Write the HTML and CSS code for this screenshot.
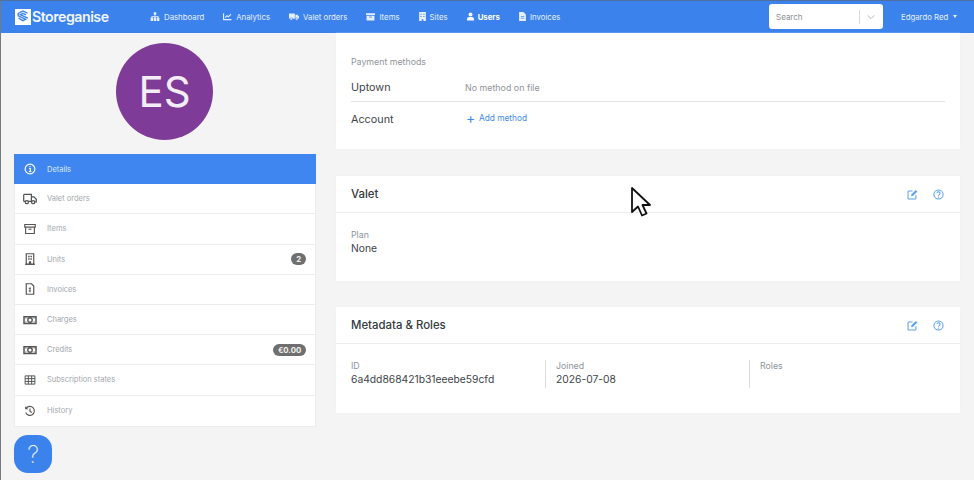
FILE: index.html
```html
<!DOCTYPE html>
<html lang="en">
<head>
<meta charset="utf-8">
<title>Storeganise</title>
<link rel="stylesheet" href="styles.css">
</head>
<body>
<svg class="defs" width="0" height="0" aria-hidden="true">
  <symbol id="i-truck" viewBox="0 0 20 16"><path d="M1 2.500a1 1 0 0 1 1-1h10v10H2a1 1 0 0 1-1-1zM12 5h3.500l3.500 3.500V12h-7z" fill="none" stroke="currentColor" stroke-width="1.800"/><circle cx="5.500" cy="12.500" r="2.200" fill="#fff" stroke="currentColor" stroke-width="1.800"/><circle cx="14.500" cy="12.500" r="2.200" fill="#fff" stroke="currentColor" stroke-width="1.800"/></symbol>
  <symbol id="i-box" viewBox="0 0 16 16"><path d="M1 2h14v3.500H1zM2.200 5.500h11.600V14H2.200z" fill="none" stroke="currentColor" stroke-width="1.500"/><path d="M6 8.300h4" stroke="currentColor" stroke-width="1.500"/></symbol>
  <symbol id="i-building" viewBox="0 0 16 16"><path d="M3 1h10v14H3z" fill="none" stroke="currentColor" stroke-width="1.600"/><path d="M1.500 15h13" stroke="currentColor" stroke-width="1.600"/><path d="M5.500 3.500h2v2h-2zM8.500 3.500h2v2h-2zM5.500 7h2v2h-2zM8.500 7h2v2h-2zM6.500 11h3v4h-3z" fill="currentColor"/></symbol>
  <symbol id="i-file" viewBox="0 0 16 16"><path d="M3 1h7l3 3v11H3z" fill="none" stroke="currentColor" stroke-width="1.600"/><path d="M8 5.500v7M6.300 7.500h2.700M6.300 10.500H9" stroke="currentColor" stroke-width="1.200"/></symbol>
  <symbol id="i-money" viewBox="0 0 18 16"><path d="M1 3.500h16v9H1z" fill="none" stroke="currentColor" stroke-width="2"/><circle cx="9" cy="8" r="3" fill="none" stroke="currentColor" stroke-width="1.800"/><path d="M3 5.500h1M3 10.500h1M14 5.500h1M14 10.500h1" stroke="currentColor" stroke-width="1.500"/></symbol>
  <symbol id="i-table" viewBox="0 0 16 16"><path d="M1.500 2.500h13v11h-13zM1.500 6.200h13M1.500 9.900h13M5.800 2.500v11M10.200 2.500v11" fill="none" stroke="currentColor" stroke-width="1.300"/></symbol>
  <symbol id="i-history" viewBox="0 0 16 16"><path d="M3 4.200A6 6 0 1 1 2.200 10M8 4.500V8.500l2.500 1.500" fill="none" stroke="currentColor" stroke-width="1.500"/><path d="M1.500 1.500v4.200h4.200z" fill="currentColor"/></symbol>
  <symbol id="i-edit" viewBox="0 0 16 16"><path d="M13 9v4.500a1 1 0 0 1-1 1H2.500a1 1 0 0 1-1-1V4a1 1 0 0 1 1-1H8" fill="none" stroke="currentColor" stroke-width="1.500"/><path d="M6 10.500l.6-2.800 6.300-6.300 2.200 2.200-6.300 6.300z" fill="currentColor"/></symbol>
  <symbol id="i-help" viewBox="0 0 16 16"><circle cx="8" cy="8" r="6.700" fill="none" stroke="currentColor" stroke-width="1.500"/><path d="M5.800 6.200a2.200 2.200 0 1 1 3.300 1.900c-.8.500-1.100.8-1.100 1.700" fill="none" stroke="currentColor" stroke-width="1.500"/><circle cx="8" cy="11.800" r="1" fill="currentColor"/></symbol>
</svg>

<header class="topbar">
  <div class="brand">
    <svg class="brand-mark" viewBox="0 0 16 16" aria-hidden="true"><path d="M0 0h16v16H0z" fill="#fff"/><path d="M12.500 4.200 8 2 3.200 4.500v2.300l7.500 3.500L8 11.700 5 10.200M3.500 9.200 8 11.500M12.800 9.200 5.300 5.700 8 4.300l3 1.500" fill="none" stroke="#3b82ec" stroke-width="1.300"/></svg>
    <span class="brand-name">Storeganise</span>
  </div>
  <nav class="mainnav">
    <a class="navlink"><svg class="navicon nav-w13" viewBox="0 0 16 14"><path d="M6 0h4v4H8.700v2H13.500v2.500H15V14h-4V8.500h1.200V7.300H8.700v1.200H10V14H6V8.500h1.300V7.300H3.800v1.200H5V14H1V8.500h1.500V6h5V4H6z" fill="currentColor"/></svg>Dashboard</a>
    <a class="navlink"><svg class="navicon nav-w11" viewBox="0 0 16 14"><path d="M1 1v11.500h14" fill="none" stroke="currentColor" stroke-width="2"/><path d="M4 9l3-3.500 2.500 2L14 3" fill="none" stroke="currentColor" stroke-width="2"/></svg>Analytics</a>
    <a class="navlink"><svg class="navicon nav-w13" viewBox="0 0 18 14"><path d="M0 1.500h10.500V11H0zM11.500 4h3.500L18 7v4h-6.500z" fill="currentColor"/><circle cx="4" cy="11.500" r="2.300" fill="currentColor" stroke="#3b82ec"/><circle cx="14" cy="11.500" r="2.300" fill="currentColor" stroke="#3b82ec"/></svg>Valet orders</a>
    <a class="navlink"><svg class="navicon nav-w10" viewBox="0 0 16 14"><path d="M0 1h16v3.500H0zM1 5.500h14V14H1z" fill="currentColor"/><path d="M5.500 8h5" stroke="#3b82ec" stroke-width="1.500"/></svg>Items</a>
    <a class="navlink"><svg class="navicon nav-w8" viewBox="0 0 12 16"><path d="M0 0h12v16H7.500v-3h-3v3H0z" fill="currentColor"/><path d="M2.500 3h2v2h-2zM7.500 3h2v2h-2zM2.500 7h2v2h-2zM7.500 7h2v2h-2z" fill="#3b82ec"/></svg>Sites</a>
    <a class="navlink is-active"><svg class="navicon nav-w8" viewBox="0 0 14 16"><circle cx="7" cy="4" r="4" fill="currentColor"/><path d="M0 16v-2.500A4.500 4.500 0 0 1 4.500 9h5a4.500 4.500 0 0 1 4.500 4.500V16z" fill="currentColor"/></svg>Users</a>
    <a class="navlink"><svg class="navicon nav-w7" viewBox="0 0 12 16"><path d="M0 0h7.500L12 4.500V16H0z" fill="currentColor"/><path d="M3 8h6M3 11h6" stroke="#3b82ec" stroke-width="1.200"/></svg>Invoices</a>
  </nav>
  <div class="searchbox">
    <span class="search-text">Search</span>
    <span class="search-sep"></span>
    <svg class="search-caret" viewBox="0 0 12 8"><path d="M1 1.500l5 5 5-5" fill="none" stroke="#b4b8bc" stroke-width="1.500"/></svg>
  </div>
  <div class="usermenu">Edgardo Red<span class="user-caret"></span></div>
</header>

<div class="page">
  <aside class="sidebar">
    <div class="avatar">ES</div>
    <ul class="sidemenu">
      <li class="sideitem is-current"><svg class="sideicon" viewBox="0 0 16 16"><circle cx="8" cy="8" r="6.500" fill="none" stroke="currentColor" stroke-width="1.600"/><path d="M8 4v1.800M6.800 7.300H8.400V11M6.600 11.300h3.200" fill="none" stroke="currentColor" stroke-width="1.500"/></svg>Details</li>
      <li class="sideitem"><svg class="sideicon wide"><use href="#i-truck"/></svg>Valet orders</li>
      <li class="sideitem"><svg class="sideicon"><use href="#i-box"/></svg>Items</li>
      <li class="sideitem"><svg class="sideicon"><use href="#i-building"/></svg>Units<span class="pill">2</span></li>
      <li class="sideitem"><svg class="sideicon"><use href="#i-file"/></svg>Invoices</li>
      <li class="sideitem"><svg class="sideicon wide"><use href="#i-money"/></svg>Charges</li>
      <li class="sideitem"><svg class="sideicon wide"><use href="#i-money"/></svg>Credits<span class="pill">€0.00</span></li>
      <li class="sideitem"><svg class="sideicon"><use href="#i-table"/></svg>Subscription states</li>
      <li class="sideitem"><svg class="sideicon"><use href="#i-history"/></svg>History</li>
    </ul>
  </aside>

  <main class="content">
    <section class="card card-pay">
      <div class="pay-title">Payment methods</div>
      <div class="pay-row pay-row-line"><span class="pay-name">Uptown</span><span class="pay-value">No method on file</span></div>
      <div class="pay-row"><span class="pay-name">Account</span><a class="add-link"><span class="plus">+</span>Add method</a></div>
    </section>

    <section class="card">
      <div class="card-head">
        <h2 class="card-title">Valet</h2>
        <svg class="head-icon"><use href="#i-edit"/></svg>
        <svg class="head-icon"><use href="#i-help"/></svg>
      </div>
      <div class="card-body body-valet">
        <div class="label">Plan</div>
        <div class="value">None</div>
      </div>
    </section>

    <section class="card">
      <div class="card-head">
        <h2 class="card-title">Metadata &amp; Roles</h2>
        <svg class="head-icon"><use href="#i-edit"/></svg>
        <svg class="head-icon"><use href="#i-help"/></svg>
      </div>
      <div class="card-body meta-grid">
        <div class="meta-col"><div class="label">ID</div><div class="value">6a4dd868421b31eeebe59cfd</div></div>
        <div class="meta-col"><div class="label">Joined</div><div class="value">2026-07-08</div></div>
        <div class="meta-col"><div class="label">Roles</div></div>
      </div>
    </section>
  </main>
</div>

<button class="helpbtn">?</button>
<svg class="cursor" viewBox="0 0 20 30"><path d="M1 1v24l6-5.500 4 9 4.500-2-4-8.500H19z" fill="#fff" stroke="#111" stroke-width="1.800" stroke-linejoin="round"/></svg>
</body>
</html>
```

FILE: styles.css
```css
* { box-sizing: border-box; }
html, body { margin: 0; height: 480px; overflow: hidden; }
body {
  background: #f4f4f4;
  font-family: "Inter", "Liberation Sans", sans-serif;
  color: #343a40;
  position: relative;
}
body::after {
  content: "";
  position: absolute;
  inset: 0;
  border-left: 1px solid #77797c;
  border-top: 1px solid #4f6f9f;
  pointer-events: none;
}
.defs { position: absolute; }
.topbar {
  height: 33px;
  background: #3b82ec;
  display: flex;
  align-items: center;
  padding-left: 15px;
  color: #e6effc;
  font-size: 7.800px;
}
.brand { display: flex; align-items: center; width: 135px; flex: none; }
.brand-mark { width: 16px; height: 16px; margin-right: 1px; flex: none; }
.brand-name { font-size: 14.200px; font-weight: 600; color: #f2f6fe; letter-spacing: -0.500px; }
.mainnav { display: flex; gap: 19px; flex: none; width: 619px; }
.navlink { display: flex; align-items: center; gap: 4px; white-space: nowrap; }
.navlink.is-active { font-weight: 700; color: #fff; }
.navicon { height: 9px; flex: none; }
.nav-w13 { width: 10px; }
.nav-w11 { width: 9px; }
.nav-w10 { width: 9px; }
.nav-w8 { width: 7px; }
.nav-w7 { width: 7px; }
.searchbox {
  width: 114px;
  height: 25px;
  background: #fff;
  border-radius: 3px;
  display: flex;
  align-items: center;
  padding: 0 6px 0 7px;
  flex: none;
}
.search-text { color: #8a8f94; font-size: 8px; flex: 1; }
.search-sep { width: 1px; height: 14px; background: #d8d8d8; margin-right: 7px; }
.search-caret { width: 8px; height: 6px; margin-right: 2px; }
.usermenu { margin-left: 18px; display: flex; align-items: center; white-space: nowrap; }
.user-caret {
  margin-left: 5px;
  border-left: 2.500px solid transparent;
  border-right: 2.500px solid transparent;
  border-top: 3px solid #e6effc;
}
.page { display: flex; align-items: flex-start; padding: 0 14px; gap: 20px; }
.sidebar { width: 302px; flex: none; padding-top: 10px; display: flex; flex-direction: column; align-items: center; }
.avatar {
  width: 97px;
  height: 97px;
  border-radius: 50%;
  background: #7f3b98;
  color: #f3edf6;
  font-size: 42px;
  display: flex;
  align-items: center;
  justify-content: center;
  margin: 0 1px 14px 0;
}
.sidemenu { list-style: none; margin: 0; padding: 0; width: 100%; background: #fff; border: 1px solid #ececec; border-top: 0; }
.sideitem {
  height: 30.200px;
  display: flex;
  align-items: center;
  font-size: 7.500px;
  color: #a3a7ab;
  border-bottom: 1px solid #ececec;
  padding: 0 9px;
}
.sideitem:last-child { border-bottom: 0; }
.sideitem.is-current { background: #3f86f0; color: #dbe8fb; margin: 0 -1px; width: calc(100% + 2px); padding: 0 10px; border-bottom: 0; }
.sideicon { width: 12px; height: 12px; margin: 0 11px 0 0; color: #555; flex: none; }
.sideicon.wide { width: 14px; margin: 0 10px 0 -1px; }
.is-current .sideicon { color: #fff; }
.pill {
  margin-left: auto;
  background: #6f6f6f;
  color: #f2f2f2;
  font-size: 7.800px;
  font-weight: 700;
  height: 12px;
  border-radius: 6px;
  padding: 0 4.800px;
  display: flex;
  align-items: center;
}
.content { width: 624px; flex: none; display: flex; flex-direction: column; gap: 26px; }
.card { background: #fff; border: 0; box-shadow: 0 0 1px #e6e6e6; }
.card-pay { height: 116px; padding: 23px 15px 0; margin-bottom: 1px; }
.pay-title { font-size: 8.800px; color: #8f9499; margin-bottom: 6px; height: 12px; line-height: 12px; }
.pay-row { display: flex; align-items: center; height: 35px; }
.pay-row-line { border-bottom: 1px solid #e4e4e4; height: 28px; }
.pay-name { width: 114px; font-size: 10.800px; color: #3e444a; }
.pay-value { font-size: 8.900px; color: #8f9499; }
.add-link { color: #3f8ae6; font-size: 8.300px; display: flex; align-items: center; margin-top: -3px; }
.plus { font-size: 14px; width: 13px; margin-left: 1px; font-weight: 400; line-height: 1; }
.card-head { height: 37px; display: flex; align-items: center; padding: 0 16px 0 15px; border-bottom: 1px solid #ededed; gap: 15px; }
.card-title { font-size: 11.400px; font-weight: 500; margin: 0 auto 0 0; color: #343a40; }
.head-icon { width: 11px; height: 11px; color: #5ba0ee; flex: none; }
.body-valet { height: 68px; padding: 16px 15px 0; }
.label { font-size: 8.800px; color: #8f9499; line-height: 12px; }
.value { font-size: 10.300px; color: #3e444a; line-height: 14px; }
.meta-grid { display: flex; height: 69px; padding: 16px 15px 0; }
.meta-col { flex: none; width: 204px; height: 28px; padding-left: 10px; border-left: 1px solid #dcdcdc; }
.meta-col:first-child { width: 194px; padding-left: 0; border-left: 0; }
.helpbtn {
  position: absolute;
  left: 14px;
  top: 435px;
  width: 38px;
  height: 38px;
  border: 0;
  border-radius: 14px;
  background: #3b82ec;
  color: #e8f1fd;
  font-family: "Inter", "Liberation Sans", sans-serif;
  font-size: 24px;
  font-weight: 200;
  padding: 0;
}
.cursor { position: absolute; left: 631px; top: 187px; width: 20px; height: 30px; }
```
